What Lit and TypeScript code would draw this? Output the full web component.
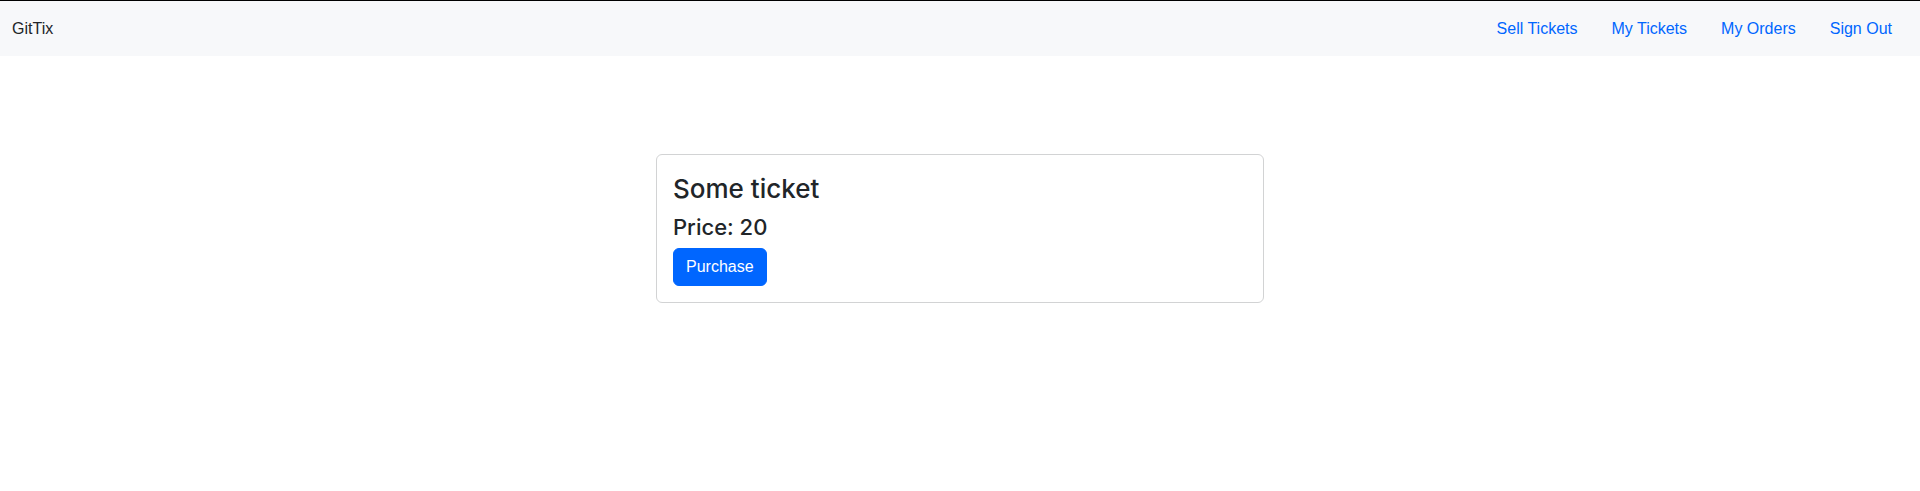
import { LitElement, html, css } from "lit";
import { customElement, property } from "lit/decorators.js";

const textFont = css`"Liberation Sans", Arial, sans-serif`;
const headingFont = css`Inter, "Liberation Sans", sans-serif`;

@customElement("site-header")
class SiteHeader extends LitElement {
  static styles = css`
    :host {
      display: block;
    }
    .navbar {
      display: flex;
      align-items: center;
      justify-content: space-between;
      padding: 8px 12px 7px;
      border-top: 1px solid #000;
      background: #f7f8fa;
      font: 16px/24px ${textFont};
    }
    .brand {
      color: #212529;
      text-decoration: none;
    }
    .links {
      display: flex;
      gap: 2px;
      margin: 0;
      padding: 0;
      list-style: none;
    }
    .link {
      display: block;
      padding: 8px 16px;
      color: #0066ff;
      text-decoration: none;
    }
  `;

  private links = ["Sell Tickets", "My Tickets", "My Orders", "Sign Out"];

  render() {
    return html`
      <nav class="navbar">
        <a class="brand" href="#">GitTix</a>
        <ul class="links">
          ${this.links.map(
            (label) => html`<li><a class="link" href="#">${label}</a></li>`
          )}
        </ul>
      </nav>
    `;
  }
}

@customElement("ticket-card")
class TicketCard extends LitElement {
  static styles = css`
    :host {
      display: block;
    }
    .card {
      padding: 16px;
      border: 1px solid #d2d3d4;
      border-radius: 6px;
      background: #fff;
      color: #212529;
    }
    .title,
    .price {
      margin: 0 0 4px;
      font-family: ${headingFont};
      font-weight: 500;
    }
    .title {
      font-size: 26px;
      line-height: 36px;
    }
    .price {
      font-size: 22px;
      line-height: 33px;
    }
    .purchase {
      display: block;
      padding: 6px 12px;
      border: 1px solid #0066ff;
      border-radius: 6px;
      background: #0066ff;
      color: #fff;
      font: 16px/24px ${textFont};
      cursor: pointer;
    }
  `;

  @property() name = "";
  @property({ type: Number }) price = 0;

  render() {
    return html`
      <article class="card">
        <h1 class="title">${this.name}</h1>
        <h2 class="price">Price: ${this.price}</h2>
        <button class="purchase" type="button">Purchase</button>
      </article>
    `;
  }
}

@customElement("app-root")
class AppRoot extends LitElement {
  static styles = css`
    :host {
      display: block;
      min-height: 100vh;
      background: #fff;
    }
    .content {
      max-width: 608px;
      margin: 0 auto;
      padding-top: 98px;
    }
  `;

  render() {
    return html`
      <site-header></site-header>
      <main class="content">
        <ticket-card name="Some ticket" price="20"></ticket-card>
      </main>
    `;
  }
}
